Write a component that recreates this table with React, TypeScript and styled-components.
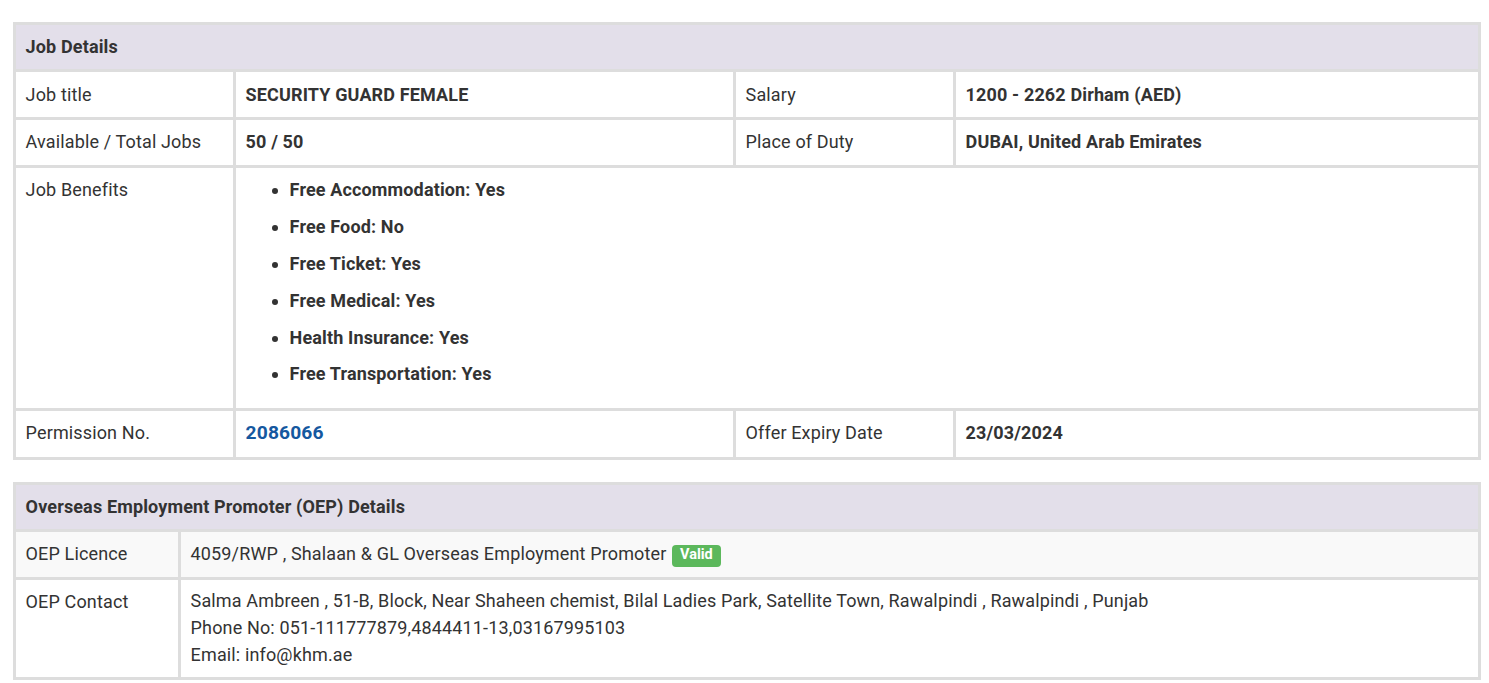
import React from "react";
import styled, { createGlobalStyle } from "styled-components";

const GlobalStyle = createGlobalStyle`
  html, body { margin: 0; padding: 0; background: #ffffff; }
  body {
    font-family: Roboto, "Noto Sans", "Liberation Sans", Arial, sans-serif;
    font-size: 18px;
    letter-spacing: 0.14px;
    color: #333333;
  }
`;

const Page = styled.div`
  padding: 22px 8px 0 13px;
  display: flex;
  flex-direction: column;
  gap: 22px;
`;

const Panel = styled.section<{ $cols: string }>`
  display: grid;
  grid-template-columns: ${(p) => p.$cols};
  gap: 3px;
  padding: 3px;
  background: #dddddd;
`;

const HeaderCell = styled.div`
  grid-column: 1 / -1;
  background: #e3dfea;
  padding: 9px 9.6px 10px;
  line-height: 25.7px;
  font-weight: 700;
  height: 44px;
  box-sizing: border-box;
`;

const Cell = styled.div<{ $span?: number; $bg?: string }>`
  grid-column: span ${(p) => p.$span ?? 1};
  background: ${(p) => p.$bg ?? "#ffffff"};
  padding: 9.6px 9.6px;
  line-height: 25.7px;
  box-sizing: border-box;
`;

const Label = styled(Cell)`
  font-weight: 400;
`;

const Value = styled(Cell)`
  font-weight: 700;
`;

const PlainValue = styled(Cell)`
  font-weight: 400;
`;

const ContactValue = styled(PlainValue)`
  line-height: 27px;
  padding: 7.5px 9.6px 8.5px;
`;

const BenefitList = styled.ul`
  margin: 0;
  padding: 0 0 0 44px;
  font-weight: 700;
`;

const Benefit = styled.li`
  margin-bottom: 11.1px;
`;

const PermissionLink = styled.a`
  display: inline-block;
  vertical-align: top;
  line-height: 26.6px;
  color: #15589f;
  font-size: 19.2px;
  font-weight: 700;
  text-decoration: none;
`;

const Badge = styled.span`
  display: inline-block;
  background: #5cb85c;
  color: #ffffff;
  font-size: 14.5px;
  font-weight: 700;
  letter-spacing: 0;
  line-height: 1;
  padding: 3.5px 8px 4.5px;
  border-radius: 4px;
  vertical-align: 1px;
  margin-left: 1px;
`;

const benefits = [
  "Free Accommodation: Yes",
  "Free Food: No",
  "Free Ticket: Yes",
  "Free Medical: Yes",
  "Health Insurance: Yes",
  "Free Transportation: Yes",
];

export default function App() {
  return (
    <>
      <GlobalStyle />
      <Page>
        <Panel $cols="217px 497px 217px 1fr">
          <HeaderCell>Job Details</HeaderCell>
          <Label>Job title</Label>
          <Value>SECURITY GUARD FEMALE</Value>
          <Label>Salary</Label>
          <Value>1200 - 2262 Dirham (AED)</Value>
          <Label>Available / Total Jobs</Label>
          <Value>50 / 50</Value>
          <Label>Place of Duty</Label>
          <Value>DUBAI, United Arab Emirates</Value>
          <Label>Job Benefits</Label>
          <Value $span={3}>
            <BenefitList>
              {benefits.map((b) => (
                <Benefit key={b}>{b}</Benefit>
              ))}
            </BenefitList>
          </Value>
          <Label>Permission No.</Label>
          <Value>
            <PermissionLink href="#">2086066</PermissionLink>
          </Value>
          <Label>Offer Expiry Date</Label>
          <Value>23/03/2024</Value>
        </Panel>
        <Panel $cols="162px 1fr">
          <HeaderCell>Overseas Employment Promoter (OEP) Details</HeaderCell>
          <Label $bg="#f9f9f9">OEP Licence</Label>
          <PlainValue $bg="#f9f9f9">
            4059/RWP , Shalaan &amp; GL Overseas Employment Promoter{" "}
            <Badge>Valid</Badge>
          </PlainValue>
          <Label>OEP Contact</Label>
          <ContactValue>
            Salma Ambreen , 51-B, Block, Near Shaheen chemist, Bilal Ladies Park, Satellite Town, Rawalpindi , Rawalpindi , Punjab
            <br />
            Phone No: 051-111777879,4844411-13,03167995103
            <br />
            Email: info@khm.ae
          </ContactValue>
        </Panel>
      </Page>
    </>
  );
}
